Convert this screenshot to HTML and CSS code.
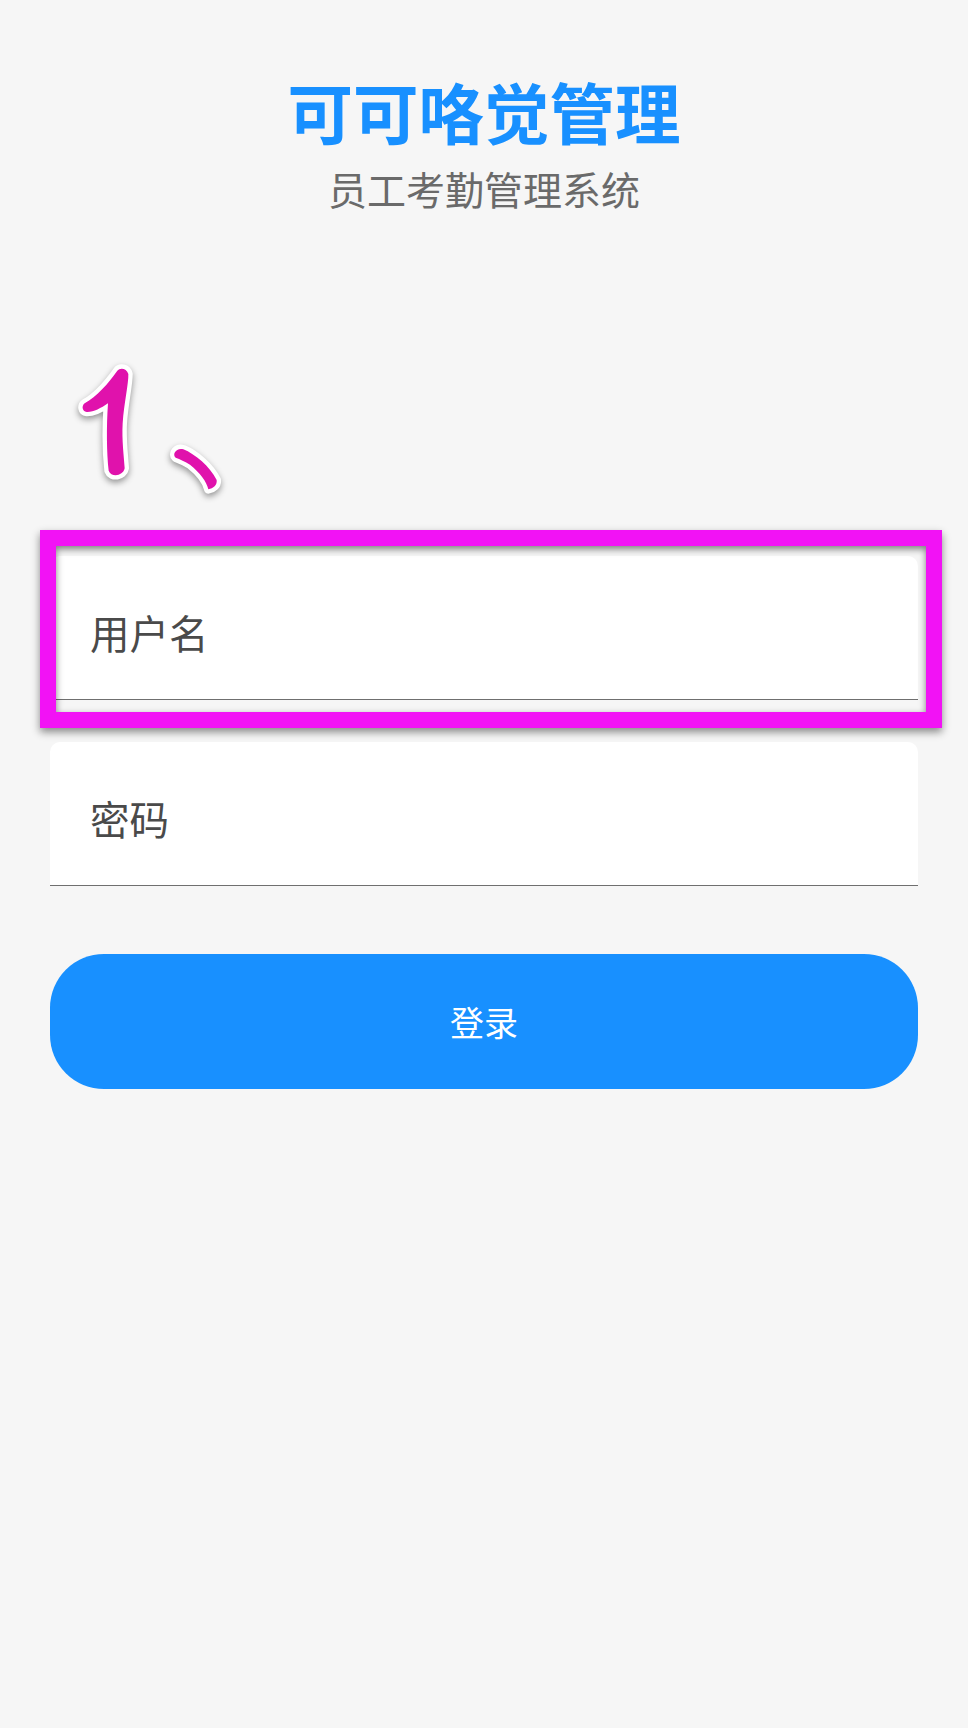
FILE: index.html
```html
<!DOCTYPE html>
<html lang="zh-CN">
<head>
    <meta charset="UTF-8">
    <meta name="viewport" content="width=device-width, initial-scale=1.0">
    <title>可可咯觉管理</title>
    <link rel="stylesheet" href="styles.css">
</head>
<body>
    <div class="login-page">
        <div class="login-header">
            <h1>可可咯觉管理</h1>
            <p>员工考勤管理系统</p>
        </div>

        <div class="login-form">
            <div class="field">用户名</div>
            <div class="field">密码</div>
            <button class="login-button">登录</button>
            <div class="highlight"></div>
        </div>

        <!-- hand drawn step marker -->
        <svg class="step-mark" viewBox="0 0 900 660" aria-hidden="true">
            <path d="M352 92 C360 82 380 84 385 102 C386 130 372 190 368 250 C365 300 372 350 374 385 C370 408 334 414 326 392 C320 340 319 260 324 190 C302 205 280 217 260 216 C246 214 244 198 254 190 C290 170 325 130 352 92 Z"/>
            <path d="M527 353 C515 342 530 322 550 328 C585 342 630 380 650 420 C652 435 640 445 625 448 C620 425 600 398 570 374 C555 364 540 358 527 353 Z"/>
        </svg>
    </div>
</body>
</html>
```

FILE: styles.css
```css
* {
    margin: 0;
    padding: 0;
    box-sizing: border-box;
}

body {
    font-family: "Noto Sans CJK SC", "Noto Sans", sans-serif;
    background: #f6f6f6;
    color: #4a4a4a;
}

.login-page {
    position: relative;
    min-height: 1728px;
    padding: 71px 50px 0;
}

.login-header {
    text-align: center;
}

.login-header h1 {
    font-size: 65.5px;
    line-height: 80px;
    font-weight: 700;
    color: #1890ff;
}

.login-header p {
    margin-top: 12px;
    font-size: 39px;
    line-height: 50px;
    color: #6a6a6a;
}

.login-form {
    position: relative;
    margin-top: 343px;
    display: flex;
    flex-direction: column;
}

.field {
    display: flex;
    align-items: center;
    height: 144px;
    padding: 7px 40px 0;
    margin-bottom: 42px;
    font-size: 39.5px;
    background: #fff;
    border-radius: 10px 10px 0 0;
    border-bottom: 1px solid #6f6f6f;
}

.login-button {
    margin-top: 26px;
    height: 135px;
    border: none;
    border-radius: 54px;
    background: #1890ff;
    color: #fff;
    font-family: inherit;
    font-size: 34px;
}

.highlight {
    position: absolute;
    top: -26px;
    left: -10px;
    right: -24px;
    height: 198px;
    border: 16px solid #f212f5;
    box-shadow: 0 4px 8px rgba(0, 0, 0, 0.45), inset 0 3px 7px rgba(0, 0, 0, 0.5);
}

.step-mark {
    position: absolute;
    top: 340px;
    left: 0;
    width: 300px;
    height: 220px;
    overflow: visible;
    filter: drop-shadow(0 3px 3px rgba(0, 0, 0, 0.4));
}

.step-mark path {
    fill: #e012ac;
    stroke: #fff;
    stroke-width: 26;
    stroke-linejoin: round;
    paint-order: stroke;
}
```
